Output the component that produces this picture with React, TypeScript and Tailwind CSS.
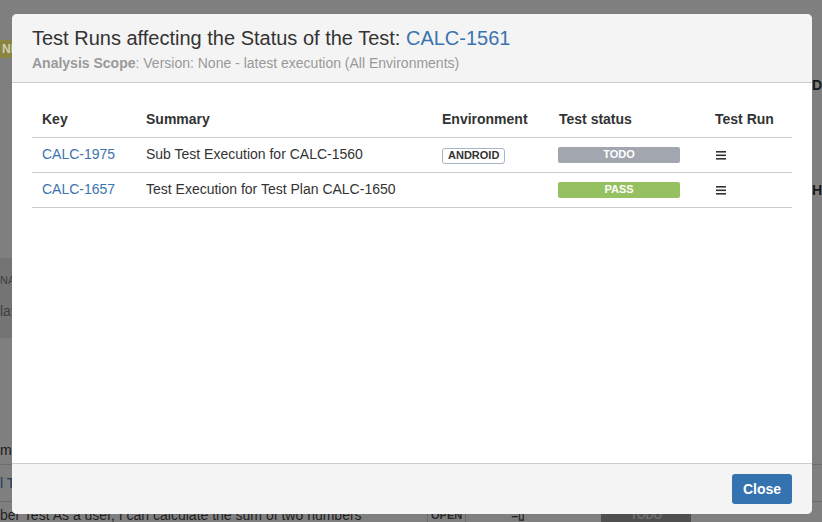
import React from 'react';

type RunRow = {
  key: string;
  summary: string;
  env?: string;
  status: 'TODO' | 'PASS';
};

const rows: RunRow[] = [
  { key: 'CALC-1975', summary: 'Sub Test Execution for CALC-1560', env: 'ANDROID', status: 'TODO' },
  { key: 'CALC-1657', summary: 'Test Execution for Test Plan CALC-1650', status: 'PASS' },
];

const statusColor: Record<RunRow['status'], string> = {
  TODO: 'bg-[#a2a6ae]',
  PASS: 'bg-[#95c160]',
};

const BackgroundPage: React.FC = () => (
  <div className="flex h-full w-full flex-col bg-[#7f7f7f] text-[14px] text-[#1a1a1a]">
    <div className="flex h-[442px]">
      <div className="flex w-[812px] flex-col">
        <div className="mt-[40px] flex h-[18px] w-[60px] items-center bg-[#8a8440] pl-[2px] text-[12px] font-bold text-[#cfcfb0]">
          NEW
        </div>
        <div className="mt-[200px] flex h-[80px] w-[300px] flex-col bg-[#747474] pt-[14px] text-[#3e3e3e]">
          <span className="text-[11px]">NA</span>
          <span className="mt-[12px] text-[14px]">lat</span>
        </div>
      </div>
      <div className="flex flex-1 flex-col pl-[1px] font-bold text-[#1a1a1a]">
        <span className="mt-[75px] text-[14px]">D</span>
        <span className="mt-[84px] text-[14px]">H</span>
      </div>
    </div>
    <div className="flex flex-col">
      <div className="flex h-[28px] items-center border-b border-[#6c6c6c] text-[14px] text-[#1a1a1a]">ma</div>
      <div className="flex h-[37px] items-center border-b border-[#6c6c6c] text-[14px] text-[#1d3a5c]">l T</div>
      <div className="flex h-[20px] items-start pt-[5px] text-[14px] leading-[16px] text-[#1f1f1f]">
        <span className="w-[427px]">ber Test As a user, I can calculate the sum of two numbers</span>
        <span className="border border-[#6a6a6a] px-[3px] text-[11px] font-bold leading-[14px] text-[#2a2a2a]">OPEN</span>
        <span className="ml-[45px] text-[12px] font-bold">=▯</span>
        <span className="ml-[76px] flex h-[18px] w-[90px] justify-center bg-[#4f4f4f] text-[11px] font-bold text-[#6f6f6f]">TODO</span>
      </div>
    </div>
  </div>
);

const App: React.FC = () => {
  return (
    <div className="relative h-[522px] w-[822px] overflow-hidden font-['Liberation_Sans',Arial,sans-serif]">
      <BackgroundPage />
      <div className="absolute left-[12px] top-[14px] flex h-[500px] w-[800px] flex-col overflow-hidden rounded-[5px] bg-white">
        <div className="flex h-[69px] flex-col border-b border-[#cccccc] bg-[#f4f4f4] px-[20px] pt-[11px]">
          <h2 className="text-[20px] leading-[26px] text-[#333333]">
            Test Runs affecting the Status of the Test: <span className="text-[#3b73af]">CALC-1561</span>
          </h2>
          <p className="mt-[3px] text-[14px] leading-[18px] text-[#999999]">
            <span className="font-bold">Analysis Scope</span>: Version: None - latest execution (All Environments)
          </p>
        </div>
        <div className="flex-1 px-[20px] pt-[20px]">
          <table className="w-[760px] border-collapse text-left text-[14px] text-[#333333]">
            <thead>
              <tr className="h-[34px] border-b border-[#cccccc]">
                <th className="w-[104px] pl-[10px] font-bold">Key</th>
                <th className="w-[296px] pl-[10px] font-bold">Summary</th>
                <th className="w-[117px] pl-[10px] font-bold">Environment</th>
                <th className="w-[156px] pl-[10px] font-bold">Test status</th>
                <th className="pl-[10px] font-bold">Test Run</th>
              </tr>
            </thead>
            <tbody>
              {rows.map((r) => (
                <tr key={r.key} className="h-[35px] border-b border-[#cccccc]">
                  <td className="pl-[10px] text-[#3b73af]">{r.key}</td>
                  <td className="pl-[10px]">{r.summary}</td>
                  <td className="pl-[10px]">
                    {r.env && (
                      <span className="inline-flex h-[16px] items-center rounded-[3px] border border-[#a9b4c2] px-[5px] text-[11px] font-bold leading-none text-[#333333]">
                        {r.env}
                      </span>
                    )}
                  </td>
                  <td className="pl-[9px]">
                    <div className={`flex h-[16px] w-[122px] items-center justify-center rounded-[2px] text-[11px] font-bold leading-none text-white ${statusColor[r.status]}`}>
                      {r.status}
                    </div>
                  </td>
                  <td className="pl-[10px]">
                    <svg width="11" height="10" viewBox="0 0 11 10" className="ml-[1px]">
                      <rect x="0" y="1" width="10" height="1.6" fill="#333333" />
                      <rect x="0" y="4.5" width="10" height="1.6" fill="#333333" />
                      <rect x="0" y="8" width="10" height="1.6" fill="#333333" />
                    </svg>
                  </td>
                </tr>
              ))}
            </tbody>
          </table>
        </div>
        <div className="flex h-[51px] items-center justify-end border-t border-[#cccccc] bg-[#f4f4f4] px-[20px]">
          <button className="h-[30px] rounded-[3px] bg-[#3572b0] px-[11px] text-[14px] font-bold text-white">
            Close
          </button>
        </div>
      </div>
    </div>
  );
};

export default App;
